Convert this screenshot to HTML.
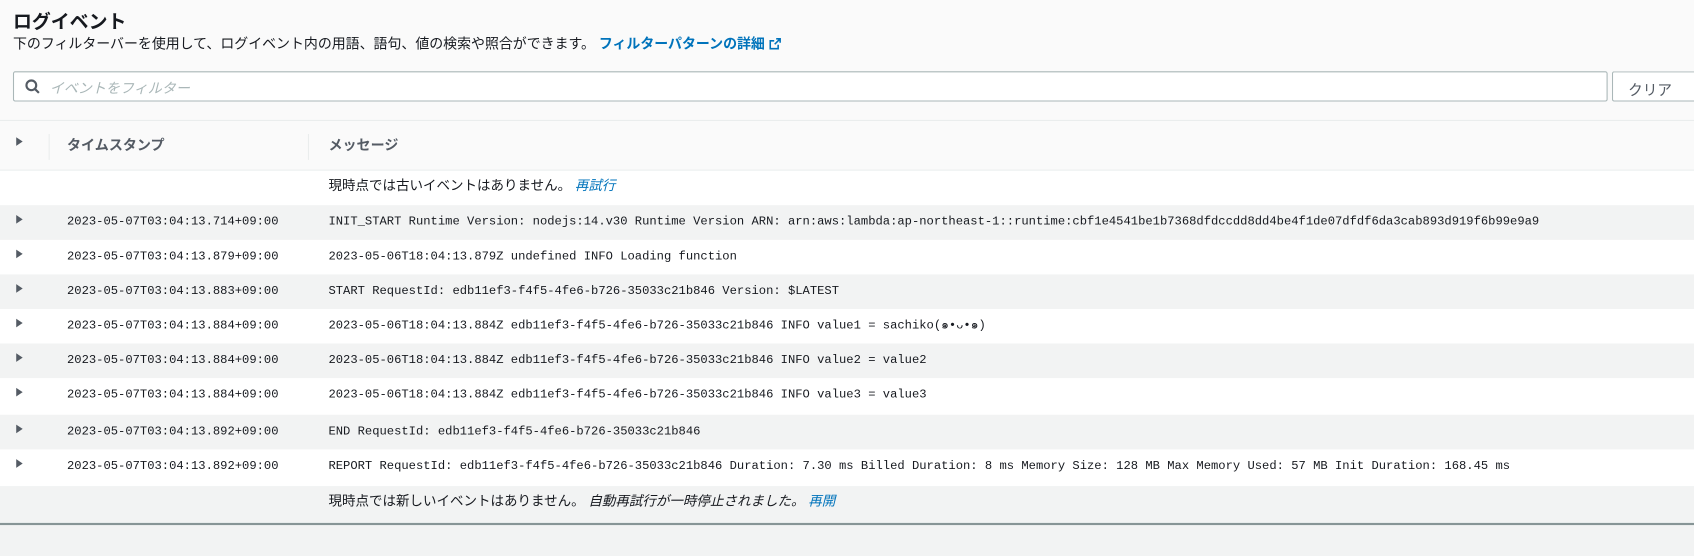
<!DOCTYPE html>
<html><head><meta charset="utf-8"><style>
*{box-sizing:border-box;margin:0;padding:0}
body{width:1694px;height:556px;background:#f2f3f3;overflow:hidden}
#w{position:absolute;left:0;top:0;width:1568px;height:515px;transform:scale(1.0804);transform-origin:0 0;font-family:"Liberation Sans","Noto Sans CJK JP",sans-serif;color:#16191f}
.top{position:absolute;left:0;top:0;width:1568px;height:112px;background:#fafafa;border-bottom:1px solid #eaeded}
h1{position:absolute;left:12px;top:7px;font-size:17.5px;font-weight:bold}
.sub{position:absolute;left:12px;top:30px;font-size:12.9px;color:#16191f}
.sub a{color:#0073bb;font-weight:bold;text-decoration:none}
.search{position:absolute;left:12px;top:66px;width:1476px;height:28px;background:#fff;border:1px solid #aab7b8;border-radius:2px}
.search span{position:absolute;left:33px;top:4px;font-size:13px;color:#aab7b8;font-style:italic}
.clr{position:absolute;left:1492px;top:66px;width:220px;height:28px;background:#fff;border:1px solid #aab7b8;border-radius:2px;font-size:13.5px;color:#545b64;padding:5px 0 0 14px}
.hdr{position:absolute;left:0;top:112px;width:1568px;height:46px;background:#fafafa;border-bottom:1px solid #eaeded;font-weight:bold;font-size:13px;color:#545b64}
.hdr div{position:absolute;top:12px}
.sep{position:absolute;top:12px;width:1px;height:24px;background:#eaeded}
.row{position:absolute;left:0;width:1568px;height:32px;font-family:"Liberation Mono",monospace;font-size:11.25px;line-height:14px;color:#16191f}
.row.g{background:#f2f3f3}.row.w{background:#fff}
.row .tri{position:absolute;left:15px;top:9px;width:0;height:0;border-left:6px solid #545b64;border-top:4px solid transparent;border-bottom:4px solid transparent}
.row .ts{position:absolute;left:62px;top:9px;height:14px}
.row .m{position:absolute;left:304px;top:9px;height:14px;white-space:nowrap}
.info{font-family:"Liberation Sans","Noto Sans CJK JP",sans-serif;font-size:12.5px}
.info .m{top:7px}
.info a{color:#0073bb;font-style:italic;text-decoration:none}
.bot{position:absolute;left:0;top:484px;width:1568px;height:2px;background:#879596}
</style></head><body><div id="w">
<div class="top">
<h1>ログイベント</h1>
<div class="sub">下のフィルターバーを使用して、ログイベント内の用語、語句、値の検索や照合ができます。 <a>フィルターパターンの詳細 <svg width="11" height="11" viewBox="0 0 12 12" style="vertical-align:-1px"><path d="M7 1h4v4M11 1L5.5 6.5M9 7v4H1V3h4" fill="none" stroke="#0073bb" stroke-width="1.6"/></svg></a></div>
<div class="search"><svg style="position:absolute;left:10px;top:6px" width="14" height="14" viewBox="0 0 14 14"><circle cx="6" cy="6" r="4.5" fill="none" stroke="#545b64" stroke-width="2"/><path d="M9.2 9.2L13 13" stroke="#545b64" stroke-width="2"/></svg><span>イベントをフィルター</span></div>
<div class="clr">クリア</div>
</div>
<div class="hdr">
<span style="position:absolute;left:15px;top:15px;border-left:6px solid #545b64;border-top:4px solid transparent;border-bottom:4px solid transparent"></span>
<div class="sep" style="left:45px"></div>
<div style="left:62px">タイムスタンプ</div>
<div class="sep" style="left:285px"></div>
<div style="left:304px">メッセージ</div>
</div>
<div class="row w info" style="top:158px"><div class="m">現時点では古いイベントはありません。 <a>再試行</a></div></div>
<div class="row g" style="top:190px"><span class="tri"></span><span class="ts">2023-05-07T03:04:13.714+09:00</span><span class="m">INIT_START Runtime Version: nodejs:14.v30 Runtime Version ARN: arn:aws:lambda:ap-northeast-1::runtime:cbf1e4541be1b7368dfdccdd8dd4be4f1de07dfdf6da3cab893d919f6b99e9a9</span></div>
<div class="row w" style="top:222px"><span class="tri"></span><span class="ts">2023-05-07T03:04:13.879+09:00</span><span class="m">2023-05-06T18:04:13.879Z undefined INFO Loading function</span></div>
<div class="row g" style="top:254px"><span class="tri"></span><span class="ts">2023-05-07T03:04:13.883+09:00</span><span class="m">START RequestId: edb11ef3-f4f5-4fe6-b726-35033c21b846 Version: $LATEST</span></div>
<div class="row w" style="top:286px"><span class="tri"></span><span class="ts">2023-05-07T03:04:13.884+09:00</span><span class="m">2023-05-06T18:04:13.884Z edb11ef3-f4f5-4fe6-b726-35033c21b846 INFO value1 = sachiko(๑•ᴗ•๑)</span></div>
<div class="row g" style="top:318px"><span class="tri"></span><span class="ts">2023-05-07T03:04:13.884+09:00</span><span class="m">2023-05-06T18:04:13.884Z edb11ef3-f4f5-4fe6-b726-35033c21b846 INFO value2 = value2</span></div>
<div class="row w" style="top:350px;height:34px"><span class="tri"></span><span class="ts">2023-05-07T03:04:13.884+09:00</span><span class="m">2023-05-06T18:04:13.884Z edb11ef3-f4f5-4fe6-b726-35033c21b846 INFO value3 = value3</span></div>
<div class="row g" style="top:384px"><span class="tri"></span><span class="ts">2023-05-07T03:04:13.892+09:00</span><span class="m">END RequestId: edb11ef3-f4f5-4fe6-b726-35033c21b846</span></div>
<div class="row w" style="top:416px;height:34px"><span class="tri"></span><span class="ts">2023-05-07T03:04:13.892+09:00</span><span class="m">REPORT RequestId: edb11ef3-f4f5-4fe6-b726-35033c21b846 Duration: 7.30 ms Billed Duration: 8 ms Memory Size: 128 MB Max Memory Used: 57 MB Init Duration: 168.45 ms</span></div>
<div class="row g info" style="top:450px;height:34px"><div class="m">現時点では新しいイベントはありません。 <i>自動再試行が一時停止されました。</i> <a>再開</a></div></div>
<div class="bot"></div>
</div></body></html>
